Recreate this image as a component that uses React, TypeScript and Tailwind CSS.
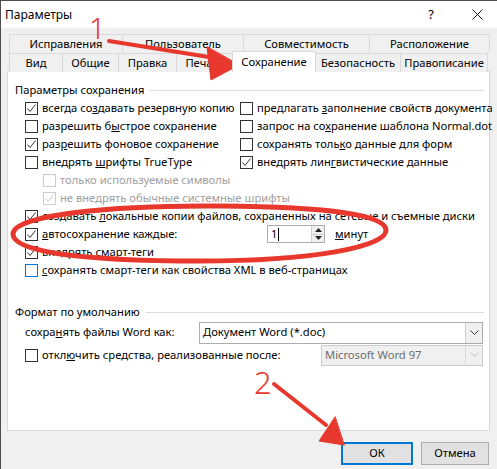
import React from 'react';

const font = { fontFamily: '"Noto Sans", "Liberation Sans", sans-serif' };

function Check({ checked, disabled, focus }: { checked?: boolean; disabled?: boolean; focus?: boolean }) {
  const border = disabled ? 'border-[#cccccc]' : focus ? 'border-[#0078d7]' : 'border-[#333333]';
  return (
    <div className={`w-[13px] h-[13px] shrink-0 border bg-white flex items-center justify-center ${border}`}>
      {checked && (
        <svg width="11" height="11" viewBox="0 0 11 11">
          <polyline points="1.5,5.5 4,8.5 9.5,1.5" fill="none" stroke={disabled ? '#c4c4c4' : '#333'} strokeWidth="1" />
        </svg>
      )}
    </div>
  );
}

function Row({ checked, disabled, focus, children, className = '' }: any) {
  return (
    <div className={`h-[18px] flex items-center gap-[4px] whitespace-nowrap ${disabled ? 'text-[#a0a0a0]' : 'text-black'} ${className}`}>
      <Check checked={checked} disabled={disabled} focus={focus} />
      <span>{children}</span>
    </div>
  );
}

function Chevron({ color = '#333' }: { color?: string }) {
  return (
    <svg width="9" height="6" viewBox="0 0 9 6">
      <polyline points="0.5,0.5 4.5,4.5 8.5,0.5" fill="none" stroke={color} strokeWidth="1" />
    </svg>
  );
}

function Tab({ label, w, selected }: { label: string; w: number; selected?: boolean }) {
  return (
    <div
      style={{ width: w }}
      className={`flex items-center justify-center border-l border-t border-r -mr-px border-[#d9d9d9] whitespace-nowrap ${
        selected ? 'bg-white h-[21px] -mt-[2px] relative z-10 border-b-0' : 'bg-[#f0f0f0] h-[19px]'
      }`}
    >
      {label}
    </div>
  );
}

export default function App() {
  return (
    <div style={font} className="relative w-[497px] h-[469px] overflow-hidden bg-[#f0f0f0] border-l border-t border-[#4d4d4d] text-[11.2px] text-black">
      <div className="h-[27px] bg-white flex items-center pl-[4px] pr-[14px]">
        <span className="text-[12px]">Параметры</span>
        <span className="ml-auto mr-[38px] text-[13px]">?</span>
        <svg width="11" height="11" viewBox="0 0 11 11">
          <path d="M0.5,0.5 L10.5,10.5 M10.5,0.5 L0.5,10.5" stroke="#111" strokeWidth="1" />
        </svg>
      </div>

      <div className="pt-[6px] pl-[8px] flex flex-col">
        <div className="flex">
          <Tab label="Исправления" w={114} />
          <Tab label="Пользователь" w={122} />
          <Tab label="Совместимость" w={127} />
          <Tab label="Расположение" w={121} />
        </div>
        <div className="flex">
          <Tab label="Вид" w={54} />
          <Tab label="Общие" w={57} />
          <Tab label="Правка" w={59} />
          <Tab label="Печать" w={57} />
          <Tab label="Сохранение" w={84} selected />
          <Tab label="Безопасность" w={86} />
          <Tab label="Правописание" w={88} />
        </div>
      </div>

      <div className="ml-[6px] w-[483px] h-[360px] bg-white border border-[#d9d9d9] -mt-px pt-[11px] pl-[7px]">
        <div className="flex items-center gap-[6px] h-[14px]">
          <span>Параметры сохранения</span>
          <div className="flex-1 h-px bg-[#dcdcdc] mr-[5px]" />
        </div>
        <div className="pl-[10px] mt-[2px] flex flex-col">
          <div className="grid grid-cols-[215px_1fr]">
            <div className="flex flex-col">
              <Row checked>всегда со<u>з</u>давать резервную копию</Row>
              <Row>разрешить б<u>ы</u>строе сохранение</Row>
              <Row checked>раз<u>р</u>ешить фоновое сохранение</Row>
              <Row>внедрять <u>ш</u>рифты TrueType</Row>
            </div>
            <div className="flex flex-col">
              <Row>предлагать <u>з</u>аполнение свойств документа</Row>
              <Row>запрос на со<u>х</u>ранение шаблона Normal.dot</Row>
              <Row>сохранять толь<u>к</u>о данные для форм</Row>
              <Row checked>внедрять лин<u>г</u>вистические данные</Row>
            </div>
          </div>
          <Row disabled className="pl-[18px]">только используемые символы</Row>
          <Row disabled checked className="pl-[18px]">не внедрять обычные системные шрифты</Row>
          <Row checked>создавать <u>л</u>окальные копии файлов, сохраненных на сетевые и съемные диски</Row>
          <div className="h-[18px] flex items-center">
            <Row checked className="w-[242px]"><u>а</u>втосохранение каждые:</Row>
            <div className="w-[58px] h-[18px] border border-[#adadad] flex bg-white">
              <div className="flex-1 flex items-center pl-[3px] leading-none">
                1<span className="inline-block w-px h-[13px] bg-black ml-px" />
              </div>
              <div className="w-[13px] flex flex-col border-l border-[#d0d0d0]">
                <div className="flex-1 flex items-center justify-center bg-[#f0f0f0] border-b border-[#d0d0d0]">
                  <svg width="7" height="4" viewBox="0 0 7 4"><polygon points="0,4 3.5,0 7,4" fill="#222" /></svg>
                </div>
                <div className="flex-1 flex items-center justify-center bg-[#f0f0f0]">
                  <svg width="7" height="4" viewBox="0 0 7 4"><polygon points="0,0 3.5,4 7,0" fill="#222" /></svg>
                </div>
              </div>
            </div>
            <span className="ml-[10px]"><u>м</u>инут</span>
          </div>
          <Row checked>внедрять <u>с</u>март-теги</Row>
          <Row focus><u>с</u>охранять смарт-теги как свойства XML в веб-страницах</Row>
        </div>

        <div className="flex items-center gap-[6px] h-[14px] mt-[26px]">
          <span>Формат по умолчанию</span>
          <div className="flex-1 h-px bg-[#dcdcdc] mr-[5px]" />
        </div>
        <div className="pl-[10px] mt-[2px] flex flex-col">
          <div className="h-[23px] flex items-center">
            <span className="w-[174px]">сохра<u>н</u>ять файлы Word как:</span>
            <div className="w-[284px] h-[22px] border border-[#adadad] bg-white flex">
              <div className="flex-1 flex items-center pl-[3px]">Документ Word (*.doc)</div>
              <div className="w-[17px] border-l border-[#d0d0d0] bg-[#f0f0f0] flex items-center justify-center">
                <Chevron />
              </div>
            </div>
          </div>
          <div className="h-[22px] flex items-center">
            <Row className="w-[296px]">откл<u>ю</u>чить средства, реализованные после:</Row>
            <div className="w-[162px] h-[21px] border border-[#cccccc] bg-[#f0f0f0] flex text-[#6d6d6d]">
              <div className="flex-1 flex items-center pl-[3px]">Microsoft Word 97</div>
              <div className="w-[17px] border-l border-[#d9d9d9] flex items-center justify-center">
                <Chevron color="#bfbfbf" />
              </div>
            </div>
          </div>
        </div>
      </div>

      <div className="flex justify-end gap-[8px] pr-[8px] mt-[11px]">
        <div className="w-[72px] h-[23px] bg-[#e1e1e1] border-2 border-[#0078d7] flex items-center justify-center">ОК</div>
        <div className="w-[68px] h-[23px] bg-[#e1e1e1] border border-[#adadad] flex items-center justify-center">Отмена</div>
      </div>

      <span className="absolute left-[88px] top-[12px] text-[29px] leading-none text-[#e8382d] font-light">1</span>
      <span className="absolute left-[253px] top-[366px] text-[31px] leading-none text-[#e8382d] font-light">2</span>
      <svg className="absolute inset-0 pointer-events-none" width="497" height="469" viewBox="0 0 497 469">
        <g fill="#e8382d" stroke="#e8382d" strokeLinecap="round" strokeLinejoin="round">
          <line x1="108" y1="40" x2="214" y2="57" strokeWidth="4" />
          <polygon points="206,46 210,79 238,64" strokeWidth="1" />
          <line x1="273" y1="383" x2="325" y2="424" strokeWidth="4" />
          <polygon points="334,416 318,440 343,444" strokeWidth="1" />
        </g>
        <path
          d="M385,229 C384,214 330,206 220,205 C110,204 12,214 12,233 C12,252 90,260 200,260 C310,260 386,246 385,229 Z"
          fill="none"
          stroke="#e8382d"
          strokeWidth="5"
        />
      </svg>
    </div>
  );
}
